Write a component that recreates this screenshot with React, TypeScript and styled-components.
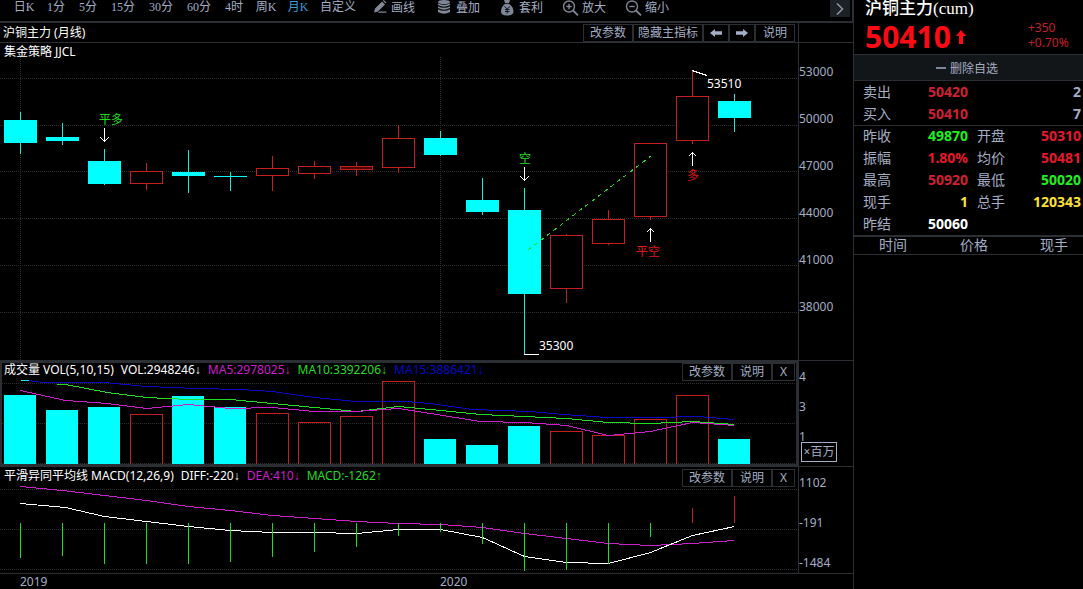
import React from "react";
import styled, { createGlobalStyle } from "styled-components";

const GlobalStyle = createGlobalStyle`
  * { box-sizing: border-box; }
  body { margin: 0; background: #000; color: #fff; }
  button { font: inherit; color: inherit; background: none; border: 0; padding: 0; margin: 0; cursor: pointer; }
  svg { display: block; }
`;

const fonts = {
  chart: '"Noto Sans", "Liberation Sans", "Noto Sans CJK SC", sans-serif',
  song: '"Liberation Serif", "Noto Sans CJK SC", serif',
};

const colors = {
  label: "#a4aec4",
  line: "#2b2e33",
  grid: "#2e2e2e",
  cyan: "#00ffff",
  fall: "#22e3e3",
  rise: "#c41e1e",
  green: "#22dc22",
  magenta: "#cc1ecc",
  blue: "#0808c4",
  white: "#ffffff",
};

/* ---------- layout ---------- */

const Page = styled.div`
  display: flex;
  align-items: stretch;
  min-height: 100vh;
  overflow: hidden;
  font-family: ${fonts.chart};
  font-size: 12px;
`;

const ChartColumn = styled.main`
  flex: 1;
  min-width: 0;
  display: flex;
  flex-direction: column;
`;

const QuoteColumn = styled.aside`
  flex: 0 0 230px;
  border-left: 1px solid ${colors.line};
`;

const Toolbar = styled.nav`
  display: flex;
  align-items: flex-start;
  height: 23px;
  padding: 0 2px 0 8px;
  border-bottom: 2px solid ${colors.line};
  border-right: 1px solid ${colors.line};
  font-family: ${fonts.song};
  color: ${colors.label};
`;

const PeriodButton = styled.button<{ $width: number; $active?: boolean }>`
  && {
    width: ${(p) => p.$width}px;
    line-height: 14px;
    white-space: nowrap;
    color: ${(p) => (p.$active ? "#3d9bd8" : colors.label)};
  }
`;

const Tools = styled.div`
  display: flex;
  flex: 1;
  padding-left: 11px;
`;

const ToolButton = styled.button`
  && {
    display: flex;
    align-items: center;
    gap: 3px;
    width: 63px;
    height: 15px;
    line-height: 14px;
    white-space: nowrap;
  }
`;

const MoreButton = styled.button`
  && {
    display: flex;
    align-items: center;
    justify-content: center;
    width: 20px;
    height: 17px;
    background: #1d2024;
  }
`;

const TitleBar = styled.header`
  display: flex;
  height: 20px;
  border-bottom: 1px solid ${colors.line};
`;

const TitlePlot = styled.div`
  flex: 1;
  display: flex;
  align-items: flex-end;
  justify-content: space-between;
  padding: 0 3px;
`;

const Title = styled.h1`
  margin: 0;
  font-size: 12px;
  font-weight: 400;
  line-height: 19px;
`;

const AxisColumn = styled.div<{ $top?: number; $gap?: number; $bare?: boolean; $line?: boolean }>`
  position: relative;
  flex: 0 0 ${(p) => (p.$bare ? 54 : 55)}px;
  display: flex;
  flex-direction: column;
  gap: ${(p) => p.$gap || 0}px;
  padding-top: ${(p) => p.$top || 0}px;
  border-left: ${(p) => (p.$bare ? 0 : 1)}px solid ${colors.line};
  border-top: ${(p) => (p.$line ? 1 : 0)}px solid ${colors.line};
  border-bottom: ${(p) => (p.$line ? 1 : 0)}px solid ${colors.line};
  color: ${colors.label};
  line-height: 20px;
`;

const UnitBadge = styled.span`
  position: absolute;
  left: 2px;
  bottom: 4px;
  width: 36px;
  height: 20px;
  border: 1px solid ${colors.label};
  line-height: 18px;
  text-align: center;
  white-space: nowrap;
  background: #000;
`;

const Panel = styled.section`
  display: flex;
`;

const Plot = styled.div<{ $framed?: boolean; $top?: number }>`
  flex: 1;
  min-width: 0;
  padding-top: ${(p) => p.$top || 0}px;
  ${(p) => p.$framed && `border: 3px solid ${colors.line}; border-left-width: 2px;`}
`;

const Caption = styled.div`
  height: 14px;
  padding-left: 4px;
  line-height: 18px;
`;

const IndicatorBar = styled.div<{ $inset: number; $right: number }>`
  display: flex;
  justify-content: space-between;
  height: 18px;
  padding-left: ${(p) => p.$inset}px;
  padding-right: ${(p) => p.$right}px;
`;

const Readings = styled.div`
  display: flex;
  gap: 7px;
  line-height: 14px;
  white-space: nowrap;
`;

const Reading = styled.span<{ $color?: string }>`
  color: ${(p) => p.$color || colors.white};
`;

const Arrow = styled.span`
  font-family: "Liberation Sans", sans-serif;
`;

const ButtonGroup = styled.div`
  display: flex;
`;

const BoxButton = styled.button<{ $width: number }>`
  && {
    display: flex;
    align-items: center;
    justify-content: center;
    width: ${(p) => p.$width}px;
    height: 18px;
    border: 1px solid ${colors.line};
    color: ${colors.label};
    line-height: 16px;
    white-space: nowrap;
  }
`;

const Chart = styled.svg<{ $height: number; $shift?: number }>`
  width: calc(100% + ${(p) => p.$shift || 0}px);
  height: ${(p) => p.$height}px;
  margin-left: -${(p) => p.$shift || 0}px;
  overflow: visible;
  font-family: ${fonts.chart};
  font-size: 12px;
`;

const DateAxis = styled.footer`
  display: flex;
  height: 17px;
  padding-left: 20px;
  border-top: 1px solid ${colors.line};
  color: ${colors.label};
  line-height: 16px;
`;

const Year = styled.span`
  flex: 0 0 420px;

  &:last-child {
    flex: 1;
  }
`;

/* ---------- quote column ---------- */

const Contract = styled.h2`
  margin: 0;
  padding-left: 11px;
  font-family: ${fonts.song};
  font-size: 17px;
  font-weight: 500;
  line-height: 18px;
  height: 20px;
`;

const PriceRow = styled.div`
  display: flex;
  align-items: center;
  height: 34px;
  padding: 0 12px 0 11px;
  color: #ff0a14;
`;

const LastPrice = styled.strong`
  font-size: 30px;
  line-height: 34px;
`;

const Change = styled.div`
  align-self: flex-start;
  width: 43px;
  margin-left: auto;
  color: #c81e28;
  line-height: 15px;
`;

const RemoveButton = styled.button`
  && {
    display: flex;
    align-items: center;
    justify-content: center;
    gap: 4px;
    width: 100%;
    height: 27px;
    padding-right: 3px;
    border: 1px solid ${colors.line};
    border-width: 1px 0;
    background: #131619;
    color: ${colors.label};
  }
`;

const Dash = styled.span`
  width: 10px;
  height: 2px;
  background: #7d8698;
`;

const QuoteTable = styled.table`
  width: 100%;
  table-layout: fixed;
  border-collapse: collapse;
  font-size: 14px;

  tbody + tbody {
    border-top: 1px solid ${colors.line};
  }
`;

const QuoteLabel = styled.th`
  height: 22px;
  padding: 0 0 0 9px;
  font-weight: 400;
  line-height: 20px;
  text-align: left;
  color: ${colors.label};
`;

const QuoteValue = styled.td<{ $color: string }>`
  padding: 0;
  font-weight: 700;
  line-height: 20px;
  text-align: right;
  color: ${(p) => p.$color};

  &:nth-child(n + 3) {
    padding-right: 2px;
  }
`;

const TickTable = styled.table`
  width: 100%;
  table-layout: fixed;
  border-collapse: collapse;
  border-top: 2px solid ${colors.line};
  border-bottom: 1px solid ${colors.line};
  font-size: 14px;
`;

const TickHead = styled.th`
  height: 18px;
  padding: 0 0 0 25px;
  font-weight: 400;
  line-height: 16px;
  text-align: left;
  color: ${colors.label};
`;

/* ---------- data ---------- */

type Candle = { up?: boolean; top: number; bottom: number; high: number; low: number };

const c = (top: number, bottom: number, high: number, low: number, up = false): Candle => ({ up, top, bottom, high, low });

const candles: Candle[] = [
  c(63, 86, 55, 97),
  c(80, 84, 66, 88),
  c(104, 127, 92, 128),
  c(114, 127, 106, 133, true),
  c(115, 119, 93, 136),
  c(119, 120, 115, 134),
  c(111, 119, 99, 134, true),
  c(109, 117, 104, 122, true),
  c(109, 113, 105, 119, true),
  c(81, 111, 68, 116, true),
  c(81, 98, 74, 99),
  c(143, 155, 121, 158),
  c(153, 237, 131, 297),
  c(178, 232, 177, 246, true),
  c(162, 187, 153, 188, true),
  c(86, 160, 86, 163, true),
  c(39, 84, 13, 87, true),
  c(44, 61, 37, 75),
];

const volumes = [14, 29, 26, 33, 15, 26, 32, 41, 35, 0, 58, 64, 45, 50, 54, 38, 14, 58];
const macdBars = [71, 69, 77, 77, 77, 75, 70, 65, 60, 49, 45, 57, 84, 83, 77, 50, 21, 9];

const ma5 = "20,9 65,19 107,22 146,27 188,23 230,27 272,26 314,30 356,30 398,27 430,32 480,40 524,41 566,44 608,54 650,50 692,41 734,44";
const ma10 = "56,3 65,3 107,11 146,16 188,18 230,18 272,22 314,26 356,30 398,25 430,28 480,33 524,35 566,37 608,41 650,42 692,40 734,43";
const ma15 = "28,-1 42,1 104,1 146,5 197,7 240,8 272,10 314,16 356,20 405,20 430,22 472,28 530,30 563,33 607,36 657,36 697,35 734,38";
const dea = "20,-1 62,3 104,8 146,13 188,19 230,23 272,28 314,31 356,34 398,36 440,37 482,40 524,46 566,51 608,56 650,58 692,56 734,53";
const diff = "20,16 65,20 104,29 146,34 188,39 230,43 272,45 314,45 356,46 398,42 440,42 482,50 524,69 566,75 608,76 650,65 692,48 734,39";

const STEP = 42;
const left = (i: number) => 4 + i * STEP;
const mid = (i: number) => 20 + i * STEP;

/* ---------- chart parts ---------- */

const GridLines = ({ rows }: { rows: number[] }) => (
  <g stroke={colors.grid} strokeDasharray="1 1">
    {rows.map((y) => (
      <line key={y} x1="0" x2="100%" y1={y + 0.5} y2={y + 0.5} />
    ))}
  </g>
);

const Line = ({ points, color }: { points: string; color: string }) => (
  <polyline points={points} transform="translate(0.5 0.5)" fill="none" stroke={color} />
);

const Pointer = ({ x, y, up }: { x: number; y: number; up?: boolean }) => (
  <path
    transform={`translate(${x + 0.5} ${y})`}
    d={up ? "M0 14V0M-4 4.500L0 .5L4 4.500" : "M0 0V14M-4 9.500L0 13.500L4 9.500"}
    fill="none"
    stroke="#fff"
  />
);

const PriceChart = () => (
  <Chart $height={303} shapeRendering="crispEdges" role="img" aria-label="沪铜主力月线">
    <GridLines rows={[21, 68, 114, 161, 208, 255]} />
    <g stroke={colors.grid} strokeDasharray="1 1">
      <line x1="20.5" x2="20.5" y1="0" y2="303" />
      <line x1="440.5" x2="440.5" y1="0" y2="303" />
    </g>
    {candles.map((k, i) => {
      const color = k.up ? colors.rise : colors.fall;
      return (
        <g key={i}>
          <rect x={mid(i)} y={k.high} width="1" height={k.low - k.high} fill={color} />
          {k.up ? (
            <rect
              x={left(i) + 0.5}
              y={k.top + 0.5}
              width="32"
              height={k.bottom - k.top - 1}
              fill={k.bottom - k.top < 5 ? "#4a0606" : "#000"}
              stroke={color}
            />
          ) : (
            <rect x={left(i)} y={k.top} width="33" height={k.bottom - k.top} fill={colors.cyan} />
          )}
        </g>
      );
    })}
    <line x1="528" y1="193" x2="651" y2="99" stroke={colors.green} strokeDasharray="4 4" />
    <path d="M692 13.500L707 18.500M524 297.500H539" stroke="#fff" fill="none" />
    <Pointer x={104} y={71} />
    <Pointer x={524} y={110} />
    <Pointer x={650} y={171} up />
    <Pointer x={692} y={95} up />
    <g fill={colors.green}>
      <text x="99" y="67">平多</text>
      <text x="519" y="106">空</text>
    </g>
    <g fill="#e01616">
      <text x="636" y="199">平空</text>
      <text x="687" y="123">多</text>
    </g>
    <g fill="#fff">
      <text x="707" y="31">53510</text>
      <text x="539" y="293">35300</text>
    </g>
  </Chart>
);

const VolumeChart = () => (
  <Chart $height={83} $shift={2} shapeRendering="crispEdges" role="img" aria-label="成交量">
    <GridLines rows={[2, 42, 82]} />
    {volumes.map((y, i) =>
      candles[i].up ? (
        <path key={i} d={`M${left(i) + 0.5} 83V${y + 0.5}H${left(i) + 32.5}V83`} fill="none" stroke={colors.rise} />
      ) : (
        <rect key={i} x={left(i)} y={y} width="32" height={83 - y} fill={colors.cyan} />
      )
    )}
    <Line points={ma15} color={colors.blue} />
    <Line points="20,-1 28,-1" color={colors.fall} />
    <Line points={ma10} color={colors.green} />
    <Line points={ma5} color={colors.magenta} />
  </Chart>
);

const MacdChart = () => (
  <Chart $height={85} shapeRendering="crispEdges" role="img" aria-label="MACD">
    <GridLines rows={[2, 42, 82]} />
    <Line points={dea} color={colors.magenta} />
    <Line points={diff} color={colors.white} />
    {macdBars.map((y, i) => (
      <rect
        key={i}
        x={mid(i)}
        y={Math.min(y, 36)}
        width="1"
        height={Math.abs(y - 36)}
        fill={y < 36 ? colors.rise : colors.green}
      />
    ))}
  </Chart>
);

/* ---------- icons ---------- */

const PencilIcon = () => (
  <svg width="15" height="15" viewBox="0 0 15 15" fill="#7f8796" aria-hidden="true">
    <path d="M1 12.500L2 8.500L9 1.500L12 4.500L5 11.500ZM9.800 .8L10.800 0L13.400 2.500L12.600 3.600Z" />
    <path d="M6 11.500H13.500V12.700H5Z" />
  </svg>
);

const StackIcon = () => (
  <svg width="17" height="15" viewBox="0 0 17 15" fill="#7f8796" aria-hidden="true">
    <ellipse cx="8" cy="2" rx="6" ry="2" />
    <path d="M2 3.300Q8 6.300 14 3.300V5Q8 8.300 2 5ZM2 6.300Q8 9.300 14 6.300V8Q8 11.300 2 8ZM2 9.300Q8 12.300 14 9.300V12Q8 15.500 2 12Z" />
  </svg>
);

const BagIcon = () => (
  <svg width="17" height="16" viewBox="0 0 17 16" aria-hidden="true">
    <path d="M5 0H11L10 3H6ZM6 3.800H10Q14.500 7 14.500 11.500Q14.500 15.500 8 15.500Q2 15.500 2 11.500Q2 7 6 3.800Z" fill="#7f8796" />
    <path d="M5.500 6.500L8.200 9L11 6.500M8.200 9V13.500M6 9.500H10.500M6 11.500H10.500" fill="none" stroke="#10141c" />
  </svg>
);

const MagnifierIcon = ({ plus }: { plus?: boolean }) => (
  <svg width="17" height="16" viewBox="0 0 17 16" fill="none" stroke="#7f8796" strokeWidth="1.400" aria-hidden="true">
    <circle cx="7" cy="6.500" r="5.500" />
    <path d="M11 10.500L16 15.300" strokeWidth="1.800" />
    <path d={plus ? "M4.300 6.500H9.700M7 3.800V9.200" : "M4.300 6.500H9.700"} />
  </svg>
);

const BlockArrow = ({ back }: { back?: boolean }) => (
  <svg width="12" height="8" viewBox="0 0 12 8" fill={colors.label} aria-hidden="true">
    <path d={back ? "M0 4L5 0V2.300H12V5.700H5V8Z" : "M12 4L7 0V2.300H0V5.700H7V8Z"} />
  </svg>
);

/* ---------- content ---------- */

const periods: [string, number][] = [
  ["日K", 32],
  ["1分", 32],
  ["5分", 32],
  ["15分", 38],
  ["30分", 38],
  ["60分", 38],
  ["4时", 32],
  ["周K", 32],
  ["月K", 32],
  ["自定义", 48],
];

const red = "#e8182a";
const deepRed = "#d02030";
const up = "#1ef01e";
const yellow = "#ffe030";

const orders: [string, string, string, string][] = [
  ["卖出", "50420", deepRed, "2"],
  ["买入", "50410", deepRed, "7"],
];

const stats: [string, string, string, string?, string?, string?][] = [
  ["昨收", "49870", up, "开盘", "50310", red],
  ["振幅", "1.80%", red, "均价", "50481", red],
  ["最高", "50920", deepRed, "最低", "50020", up],
  ["现手", "1", yellow, "总手", "120343", yellow],
  ["昨结", "50060", "#fff"],
];

const IndicatorButtons = () => (
  <ButtonGroup>
    <BoxButton $width={50}>改参数</BoxButton>
    <BoxButton $width={40}>说明</BoxButton>
    <BoxButton $width={23} aria-label="关闭">X</BoxButton>
  </ButtonGroup>
);

export default function App() {
  return (
    <Page>
      <GlobalStyle />
      <ChartColumn>
        <Toolbar>
          {periods.map(([name, width]) => (
            <PeriodButton key={name} $width={width} $active={name === "月K"}>
              {name}
            </PeriodButton>
          ))}
          <Tools>
            <ToolButton><PencilIcon />画线</ToolButton>
            <ToolButton><StackIcon />叠加</ToolButton>
            <ToolButton><BagIcon />套利</ToolButton>
            <ToolButton><MagnifierIcon plus />放大</ToolButton>
            <ToolButton><MagnifierIcon />缩小</ToolButton>
          </Tools>
          <MoreButton aria-label="更多">
            <svg width="8" height="12" viewBox="0 0 8 12" fill="none" stroke="#8a92a2" strokeWidth="1.600" aria-hidden="true">
              <path d="M1 .5L6.500 6L1 11.500" />
            </svg>
          </MoreButton>
        </Toolbar>

        <TitleBar>
          <TitlePlot>
            <Title>沪铜主力 (月线)</Title>
            <ButtonGroup>
              <BoxButton $width={50}>改参数</BoxButton>
              <BoxButton $width={70}>隐藏主指标</BoxButton>
              <BoxButton $width={26} aria-label="上一个"><BlockArrow back /></BoxButton>
              <BoxButton $width={26} aria-label="下一个"><BlockArrow /></BoxButton>
              <BoxButton $width={40}>说明</BoxButton>
            </ButtonGroup>
          </TitlePlot>
          <AxisColumn />
        </TitleBar>

        <Panel>
          <Plot>
            <Caption>集金策略 JJCL</Caption>
            <PriceChart />
          </Plot>
          <AxisColumn $top={19} $gap={27}>
            {[53000, 50000, 47000, 44000, 41000, 38000].map((v) => (
              <span key={v}>{v}</span>
            ))}
          </AxisColumn>
        </Panel>

        <Panel>
          <Plot $framed>
            <IndicatorBar $inset={2} $right={1}>
              <Readings>
                <Reading>成交量 VOL(5,10,15)</Reading>
                <Reading>VOL:2948246<Arrow>↓</Arrow></Reading>
                <Reading $color={colors.magenta}>MA5:2978025<Arrow>↓</Arrow></Reading>
                <Reading $color={colors.green}>MA10:3392206<Arrow>↓</Arrow></Reading>
                <Reading $color={colors.blue}>MA15:3886421<Arrow>↓</Arrow></Reading>
              </Readings>
              <IndicatorButtons />
            </IndicatorBar>
            <VolumeChart />
          </Plot>
          <AxisColumn $bare $line $top={6} $gap={10}>
            <span>4</span>
            <span>3</span>
            <span>1</span>
            <UnitBadge>×百万</UnitBadge>
          </AxisColumn>
        </Panel>

        <Panel>
          <Plot $top={2}>
            <IndicatorBar $inset={4} $right={3}>
              <Readings>
                <Reading>平滑异同平均线 MACD(12,26,9)</Reading>
                <Reading>DIFF:-220<Arrow>↓</Arrow></Reading>
                <Reading $color={colors.magenta}>DEA:410<Arrow>↓</Arrow></Reading>
                <Reading $color={colors.green}>MACD:-1262<Arrow>↑</Arrow></Reading>
              </Readings>
              <IndicatorButtons />
            </IndicatorBar>
            <MacdChart />
          </Plot>
          <AxisColumn $top={6} $gap={20}>
            <span>1102</span>
            <span>-191</span>
            <span>-1484</span>
          </AxisColumn>
        </Panel>

        <DateAxis>
          <Year>2019</Year>
          <Year>2020</Year>
        </DateAxis>
      </ChartColumn>

      <QuoteColumn>
        <Contract>沪铜主力(cum)</Contract>
        <PriceRow>
          <LastPrice>50410</LastPrice>
          <svg width="20" height="14" viewBox="0 0 20 14" fill="#ff0a14" aria-hidden="true">
            <path d="M10 0L15 6H12V14H8V6H5Z" />
          </svg>
          <Change>
            <div>+350</div>
            <div>+0.70%</div>
          </Change>
        </PriceRow>
        <RemoveButton><Dash />删除自选</RemoveButton>
        <QuoteTable>
          <colgroup>
            <col width="46" />
            <col width="68" />
            <col width="46" />
            <col />
          </colgroup>
          <tbody>
            {orders.map(([name, price, color, lots]) => (
              <tr key={name}>
                <QuoteLabel scope="row">{name}</QuoteLabel>
                <QuoteValue $color={color}>{price}</QuoteValue>
                <QuoteValue $color={colors.label} colSpan={2}>{lots}</QuoteValue>
              </tr>
            ))}
          </tbody>
          <tbody>
            {stats.map(([name, value, color, name2, value2, color2]) => (
              <tr key={name}>
                <QuoteLabel scope="row">{name}</QuoteLabel>
                <QuoteValue $color={color}>{value}</QuoteValue>
                {name2 && <QuoteLabel scope="row">{name2}</QuoteLabel>}
                {value2 && <QuoteValue $color={color2 || red}>{value2}</QuoteValue>}
              </tr>
            ))}
          </tbody>
        </QuoteTable>
        <TickTable>
          <colgroup>
            <col width="81" />
            <col width="80" />
            <col />
          </colgroup>
          <thead>
            <tr>
              <TickHead scope="col">时间</TickHead>
              <TickHead scope="col">价格</TickHead>
              <TickHead scope="col">现手</TickHead>
            </tr>
          </thead>
        </TickTable>
      </QuoteColumn>
    </Page>
  );
}
